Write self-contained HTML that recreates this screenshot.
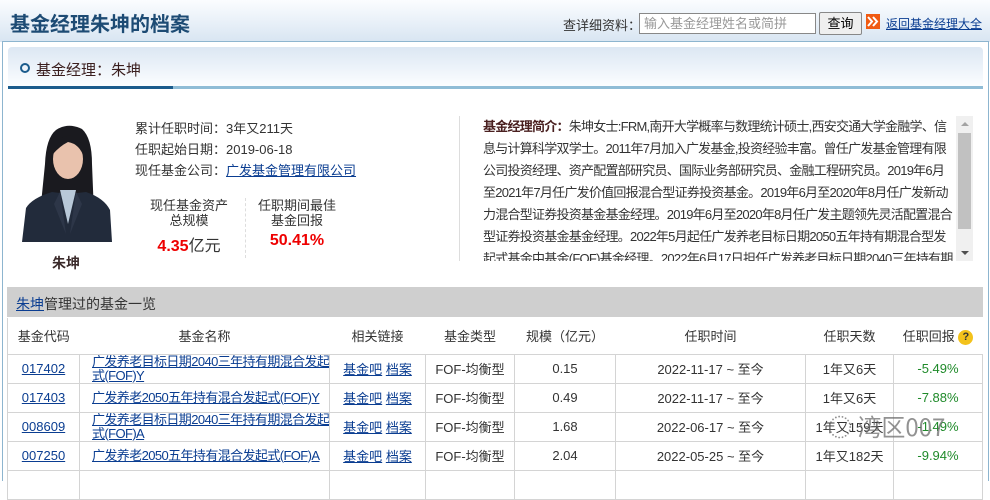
<!DOCTYPE html>
<html><head><meta charset="utf-8">
<style>
*{margin:0;padding:0;box-sizing:border-box}
body{width:990px;height:473px;overflow:hidden;background:#fff;font-family:"Liberation Sans","Noto Sans CJK SC",sans-serif;font-size:13px;color:#333;position:relative}
.a{position:absolute;white-space:nowrap}
a{color:#0a3d91;text-decoration:underline}
#hdr{left:0;top:0;width:990px;height:42px;background:linear-gradient(#fbfdff,#d8e5f2)}
#box{left:2px;top:41px;width:987px;height:440px;border:1px solid #8db5cf;border-bottom:none;background:#fff}
#sub{left:8px;top:47px;width:975px;height:42px;background:linear-gradient(#dce7f3,#fbfdff);border-radius:4px 4px 0 0;border-bottom:3px solid #8fbcd6}
#subd{left:8px;top:86px;width:165px;height:3px;background:#1a5b8c}
table{position:absolute;left:7px;top:318px;width:976px;border-collapse:collapse;table-layout:fixed}
td{border:1px solid #d4d4d4;height:29px;text-align:center;font-size:13px;color:#333;white-space:nowrap;overflow:hidden}
th{height:36px;font-weight:normal;font-size:13px;color:#333;border-left:1px solid #d4d4d4}
th:not(:first-child){border-left:none}
td.n{text-align:left;padding-left:12px;line-height:14px;letter-spacing:-0.6px}
.g{color:#1f8a2a}
.bio{left:483px;top:116px;width:472px;font-size:13px;line-height:22px;white-space:normal;color:#333;letter-spacing:-0.75px;height:145px;overflow:hidden}
</style></head><body>
<div class="a" id="hdr"></div>
<div class="a" style="left:10px;top:8px;font-size:20px;font-weight:bold;color:#1d4b74">基金经理朱坤的档案</div>
<div class="a" style="left:563px;top:15px;font-size:13px;color:#333">查详细资料：</div>
<div class="a" style="left:639px;top:13px;width:177px;height:21px;border:1px solid #888;background:#fff;font-size:13px;color:#999;padding:1px 4px;line-height:17px">输入基金经理姓名或简拼</div>
<div class="a" style="left:819px;top:12px;width:43px;height:23px;border:1px solid #888;border-radius:2px;background:#efefef;font-size:13px;color:#000;text-align:center;line-height:21px">查询</div>
<div class="a" style="left:866px;top:14px;width:14px;height:15px;background:#f05a12"><svg width="14" height="15"><path d="M2 3l4 4.5-4 4.5M7 3l4 4.5-4 4.5" stroke="#fff" stroke-width="2" fill="none"/></svg></div>
<a class="a" style="left:886px;top:15px;font-size:12px">返回基金经理大全</a>
<div class="a" id="box"></div>
<div class="a" id="sub"></div>
<div class="a" id="subd"></div>
<div class="a" style="left:20px;top:63px;width:10px;height:10px;border:2px solid #1a5b8c;border-radius:50%"></div>
<div class="a" style="left:36px;top:59px;font-size:15px;color:#3a1e1e">基金经理：朱坤</div>
<svg class="a" style="left:20px;top:124px" width="94" height="118" viewBox="0 0 94 118">
<path d="M36 6Q48-2 62 5Q72 14 72 40L74 90L20 90L25 40Q26 14 36 6Z" fill="#1a1a1f"/>
<ellipse cx="48" cy="35" rx="15" ry="20" fill="#e9c2ad"/>
<path d="M33 30Q36 10 52 12Q64 16 64 34Q60 20 48 18Q40 22 33 30Z" fill="#1a1a1f"/>
<path d="M2 118L6 84Q12 74 32 68L48 70L66 68Q84 74 90 86L92 118Z" fill="#222b3b"/>
<path d="M40 66L48 100L56 66Z" fill="#b8c8d8"/>
<path d="M40 68L46 110L34 80Z M56 68L50 110L62 80Z" fill="#2d3648"/>
</svg>
<div class="a" style="left:52px;top:253px;font-size:14px;font-weight:bold;color:#3a2a2a">朱坤</div>
<div class="a" style="left:135px;top:118px">累计任职时间：3年又211天</div>
<div class="a" style="left:135px;top:139px">任职起始日期：2019-06-18</div>
<div class="a" style="left:135px;top:160px">现任基金公司：<a>广发基金管理有限公司</a></div>
<div class="a" style="left:139px;top:198px;width:100px;text-align:center;line-height:15px">现任基金资产<br>总规模</div>
<div class="a" style="left:139px;top:232px;width:100px;text-align:center;font-size:16px"><b style="color:#e00">4.35</b>亿元</div>
<div class="a" style="left:245px;top:198px;height:60px;border-left:1px dashed #ddd"></div>
<div class="a" style="left:247px;top:198px;width:100px;text-align:center;line-height:15px">任职期间最佳<br>基金回报</div>
<div class="a" style="left:247px;top:232px;width:100px;text-align:center;font-size:16px;font-weight:bold;color:#e00">50.41%</div>
<div class="a" style="left:459px;top:116px;height:145px;border-left:1px solid #ddd"></div>
<div class="a bio"><b style="color:#4a2020">基金经理简介：</b>朱坤女士:FRM,南开大学概率与数理统计硕士,西安交通大学金融学、信息与计算科学双学士。2011年7月加入广发基金,投资经验丰富。曾任广发基金管理有限公司投资经理、资产配置部研究员、国际业务部研究员、金融工程研究员。2019年6月至2021年7月任广发价值回报混合型证券投资基金。2019年6月至2020年8月任广发新动力混合型证券投资基金基金经理。2019年6月至2020年8月任广发主题领先灵活配置混合型证券投资基金基金经理。2022年5月起任广发养老目标日期2050五年持有期混合型发起式基金中基金(FOF)基金经理。2022年6月17日担任广发养老目标日期2040三年持有期混合型</div>
<div class="a" style="left:956px;top:116px;width:17px;height:145px;background:#f0f0f0"></div>
<div class="a" style="left:958px;top:133px;width:13px;height:96px;background:#c1c1c1"></div>
<div class="a" style="left:961px;top:122px;border:4px solid transparent;border-bottom:4px solid #a3a3a3;border-top:none"></div>
<div class="a" style="left:961px;top:251px;border:4px solid transparent;border-top:4px solid #505050;border-bottom:none"></div>
<div class="a" style="left:7px;top:287px;width:976px;height:30px;background:#cfcfcf"></div>
<div class="a" style="left:16px;top:294px;font-size:14px;color:#333"><a>朱坤</a>管理过的基金一览</div>
<table>
<colgroup><col style="width:72px"><col style="width:250px"><col style="width:96px"><col style="width:89px"><col style="width:101px"><col style="width:190px"><col style="width:88px"><col></colgroup>
<tr><th>基金代码</th><th>基金名称</th><th>相关链接</th><th>基金类型</th><th>规模（亿元）</th><th>任职时间</th><th>任职天数</th><th>任职回报 <span style="display:inline-block;width:15px;height:15px;border-radius:50%;background:#f3c21b;color:#333;font-size:11px;font-weight:bold;line-height:15px;vertical-align:middle">?</span></th></tr>
<tr><td><a>017402</a></td><td class="n"><a>广发养老目标日期2040三年持有期混合发起<br>式(FOF)Y</a></td><td><a>基金吧</a> <a>档案</a></td><td>FOF-均衡型</td><td>0.15</td><td>2022-11-17 ~ 至今</td><td>1年又6天</td><td class="g">-5.49%</td></tr>
<tr><td><a>017403</a></td><td class="n"><a>广发养老2050五年持有混合发起式(FOF)Y</a></td><td><a>基金吧</a> <a>档案</a></td><td>FOF-均衡型</td><td>0.49</td><td>2022-11-17 ~ 至今</td><td>1年又6天</td><td class="g">-7.88%</td></tr>
<tr><td><a>008609</a></td><td class="n"><a>广发养老目标日期2040三年持有期混合发起<br>式(FOF)A</a></td><td><a>基金吧</a> <a>档案</a></td><td>FOF-均衡型</td><td>1.68</td><td>2022-06-17 ~ 至今</td><td>1年又159天</td><td class="g">-1.49%</td></tr>
<tr><td><a>007250</a></td><td class="n"><a>广发养老2050五年持有混合发起式(FOF)A</a></td><td><a>基金吧</a> <a>档案</a></td><td>FOF-均衡型</td><td>2.04</td><td>2022-05-25 ~ 至今</td><td>1年又182天</td><td class="g">-9.94%</td></tr>
<tr><td></td><td></td><td></td><td></td><td></td><td></td><td></td><td></td></tr>
</table>
<div class="a" style="left:828px;top:408px;font-size:24px;color:rgba(110,110,110,.75);font-family:'Noto Sans CJK SC',sans-serif">◌ 湾区007</div>
</body></html>
